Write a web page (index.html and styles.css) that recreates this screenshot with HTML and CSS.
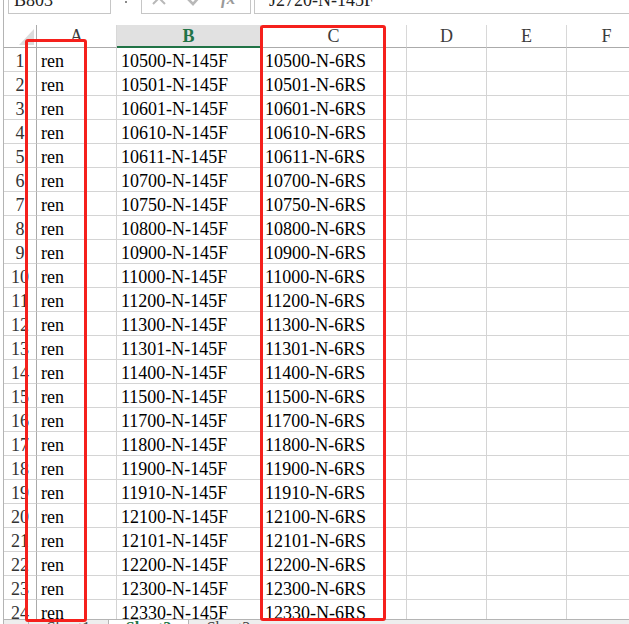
FILE: index.html
```html
<!DOCTYPE html>
<html>
<head>
<meta charset="utf-8">
<link rel="stylesheet" href="styles.css">
</head>
<body>
<div class="app">
  <div class="main">
    <div class="fbar">
      <div class="namebox">B803</div>
      <div class="grip"></div>
      <div class="iconbox">
        <svg class="ico-x" width="16" height="16" viewBox="0 0 16 16"><path d="M2 2 L14 14 M14 2 L2 14" stroke="#b8b8b8" stroke-width="2" fill="none"/></svg>
        <svg class="ico-ok" width="18" height="16" viewBox="0 0 18 16"><path d="M2 8 L7 13 L16 3" stroke="#b8b8b8" stroke-width="2.6" fill="none"/></svg>
        <span class="fx">fx</span>
      </div>
      <div class="formula">J2720-N-145F</div>
    </div>
    <div class="sheet-wrap">
      <div class="sheet">
        <div class="corner"><span class="tri"></span></div>
        <div class="ch">A</div>
        <div class="ch sel">B</div>
        <div class="ch">C</div>
        <div class="ch">D</div>
        <div class="ch">E</div>
        <div class="ch">F</div>

        <div class="rh">1</div><div class="c">ren</div><div class="c">10500-N-145F</div><div class="c">10500-N-6RS</div><div class="c"></div><div class="c"></div><div class="c"></div>
        <div class="rh">2</div><div class="c">ren</div><div class="c">10501-N-145F</div><div class="c">10501-N-6RS</div><div class="c"></div><div class="c"></div><div class="c"></div>
        <div class="rh">3</div><div class="c">ren</div><div class="c">10601-N-145F</div><div class="c">10601-N-6RS</div><div class="c"></div><div class="c"></div><div class="c"></div>
        <div class="rh">4</div><div class="c">ren</div><div class="c">10610-N-145F</div><div class="c">10610-N-6RS</div><div class="c"></div><div class="c"></div><div class="c"></div>
        <div class="rh">5</div><div class="c">ren</div><div class="c">10611-N-145F</div><div class="c">10611-N-6RS</div><div class="c"></div><div class="c"></div><div class="c"></div>
        <div class="rh">6</div><div class="c">ren</div><div class="c">10700-N-145F</div><div class="c">10700-N-6RS</div><div class="c"></div><div class="c"></div><div class="c"></div>
        <div class="rh">7</div><div class="c">ren</div><div class="c">10750-N-145F</div><div class="c">10750-N-6RS</div><div class="c"></div><div class="c"></div><div class="c"></div>
        <div class="rh">8</div><div class="c">ren</div><div class="c">10800-N-145F</div><div class="c">10800-N-6RS</div><div class="c"></div><div class="c"></div><div class="c"></div>
        <div class="rh">9</div><div class="c">ren</div><div class="c">10900-N-145F</div><div class="c">10900-N-6RS</div><div class="c"></div><div class="c"></div><div class="c"></div>
        <div class="rh">10</div><div class="c">ren</div><div class="c">11000-N-145F</div><div class="c">11000-N-6RS</div><div class="c"></div><div class="c"></div><div class="c"></div>
        <div class="rh">11</div><div class="c">ren</div><div class="c">11200-N-145F</div><div class="c">11200-N-6RS</div><div class="c"></div><div class="c"></div><div class="c"></div>
        <div class="rh">12</div><div class="c">ren</div><div class="c">11300-N-145F</div><div class="c">11300-N-6RS</div><div class="c"></div><div class="c"></div><div class="c"></div>
        <div class="rh">13</div><div class="c">ren</div><div class="c">11301-N-145F</div><div class="c">11301-N-6RS</div><div class="c"></div><div class="c"></div><div class="c"></div>
        <div class="rh">14</div><div class="c">ren</div><div class="c">11400-N-145F</div><div class="c">11400-N-6RS</div><div class="c"></div><div class="c"></div><div class="c"></div>
        <div class="rh">15</div><div class="c">ren</div><div class="c">11500-N-145F</div><div class="c">11500-N-6RS</div><div class="c"></div><div class="c"></div><div class="c"></div>
        <div class="rh">16</div><div class="c">ren</div><div class="c">11700-N-145F</div><div class="c">11700-N-6RS</div><div class="c"></div><div class="c"></div><div class="c"></div>
        <div class="rh">17</div><div class="c">ren</div><div class="c">11800-N-145F</div><div class="c">11800-N-6RS</div><div class="c"></div><div class="c"></div><div class="c"></div>
        <div class="rh">18</div><div class="c">ren</div><div class="c">11900-N-145F</div><div class="c">11900-N-6RS</div><div class="c"></div><div class="c"></div><div class="c"></div>
        <div class="rh">19</div><div class="c">ren</div><div class="c">11910-N-145F</div><div class="c">11910-N-6RS</div><div class="c"></div><div class="c"></div><div class="c"></div>
        <div class="rh">20</div><div class="c">ren</div><div class="c">12100-N-145F</div><div class="c">12100-N-6RS</div><div class="c"></div><div class="c"></div><div class="c"></div>
        <div class="rh">21</div><div class="c">ren</div><div class="c">12101-N-145F</div><div class="c">12101-N-6RS</div><div class="c"></div><div class="c"></div><div class="c"></div>
        <div class="rh">22</div><div class="c">ren</div><div class="c">12200-N-145F</div><div class="c">12200-N-6RS</div><div class="c"></div><div class="c"></div><div class="c"></div>
        <div class="rh">23</div><div class="c">ren</div><div class="c">12300-N-145F</div><div class="c">12300-N-6RS</div><div class="c"></div><div class="c"></div><div class="c"></div>
        <div class="rh">24</div><div class="c">ren</div><div class="c">12330-N-145F</div><div class="c">12330-N-6RS</div><div class="c"></div><div class="c"></div><div class="c"></div>
      </div>
    </div>
    <div class="tabs">
      <div class="tab">Sheet1</div>
      <div class="tab active">Sheet2</div>
      <div class="tab">Sheet3</div>
    </div>
  </div>
  <div class="hl hl-a"></div>
  <div class="hl hl-c"></div>
</div>
</body>
</html>
```

FILE: styles.css
```css
* { box-sizing: border-box; }
html, body { margin: 0; padding: 0; background: #fff; }
body { width: 629px; height: 624px; overflow: hidden; }

.app {
  position: relative;
  width: 629px;
  height: 624px;
  overflow: hidden;
  font-family: "Liberation Serif", serif;
  font-size: 18px;
  color: #000;
}

.main {
  margin-left: 3px;
  height: 624px;
  border-left: 1px solid #b4b4b4;
  display: flex;
  flex-direction: column;
}

/* formula bar */
.fbar {
  display: flex;
  align-items: flex-end;
  height: 14px;
  margin-bottom: 11px;
  overflow: hidden;
  flex: none;
}
.namebox {
  margin-left: 4px;
  width: 103px;
  height: 26px;
  border: 1px solid #c6c6c6;
  padding: 1px 0 0 5px;
  line-height: 20px;
  color: #222;
  flex: none;
}
.grip {
  width: 2px;
  height: 2px;
  margin: 0 14px 11px 14px;
  background: #8a8a8a;
  flex: none;
}
.iconbox {
  width: 110px;
  height: 26px;
  border: 1px solid #c6c6c6;
  display: flex;
  align-items: flex-end;
  padding: 0 0 6px 9px;
  flex: none;
}
.ico-x { margin-bottom: 1px; }
.ico-ok { margin-left: 19px; margin-bottom: 0; }
.fx {
  margin-left: 17px;
  font-style: italic;
  font-weight: bold;
  color: #9a9a9a;
  font-size: 17px;
  line-height: 14px;
  height: 14px;
  margin-bottom: 1px;
}
.formula {
  margin-left: 3px;
  flex: 1;
  height: 26px;
  border: 1px solid #c6c6c6;
  border-right: none;
  padding: 1px 0 0 14px;
  line-height: 20px;
  color: #222;
}

/* sheet */
.sheet-wrap {
  height: 594px;
  overflow: hidden;
  flex: none;
}
.sheet {
  display: grid;
  grid-template-columns: 33px 80px 144px 146px 80px 80px 80px;
  grid-template-rows: 23px;
  grid-auto-rows: 24px;
}
.corner {
  border-right: 1px solid #ababab;
  border-bottom: 1px solid #ababab;
  display: flex;
  justify-content: flex-end;
  align-items: flex-end;
  padding: 0 2px 2px 0;
}
.tri {
  width: 0;
  height: 0;
  border-style: solid;
  border-width: 0 0 16px 15px;
  border-color: transparent transparent #dcdcdc transparent;
}
.ch {
  border-right: 1px solid #d8d8d8;
  border-bottom: 1px solid #ababab;
  text-align: center;
  line-height: 21px;
  padding-top: 1px;
  color: #3c3c3c;
}
.ch.sel {
  background: #e1e1e1;
  border-bottom: 2px solid #217346;
  color: #217346;
  font-weight: bold;
}
.rh {
  border-right: 1px solid #ababab;
  border-bottom: 1px solid #d4d4d4;
  text-align: center;
  line-height: 19px;
  padding-top: 4px;
  color: #333;
}
.c {
  border-right: 1px solid #d4d4d4;
  border-bottom: 1px solid #d4d4d4;
  line-height: 19px;
  padding: 4px 0 0 4px;
  white-space: nowrap;
  overflow: hidden;
}

/* sheet tabs */
.tabs {
  flex: none;
  height: 5px;
  border-top: 1px solid #b4b4b4;
  background: #eeeeee;
  display: flex;
  overflow: hidden;
  padding-left: 24px;
}
.tab {
  width: 80px;
  margin-top: -2px;
  line-height: 20px;
  height: 20px;
  text-align: center;
  color: #444;
  border-left: 1px solid #b4b4b4;
  font-size: 16px;
}
.tab.active {
  background: #fff;
  color: #217346;
  font-weight: bold;
}

/* red highlight boxes */
.hl {
  position: absolute;
  border: 3px solid #f5201c;
  border-radius: 3px;
}
.hl-a { left: 25px; top: 39px; width: 62px; height: 583px; }
.hl-c { left: 260px; top: 25px; width: 126px; height: 596px; }
```
